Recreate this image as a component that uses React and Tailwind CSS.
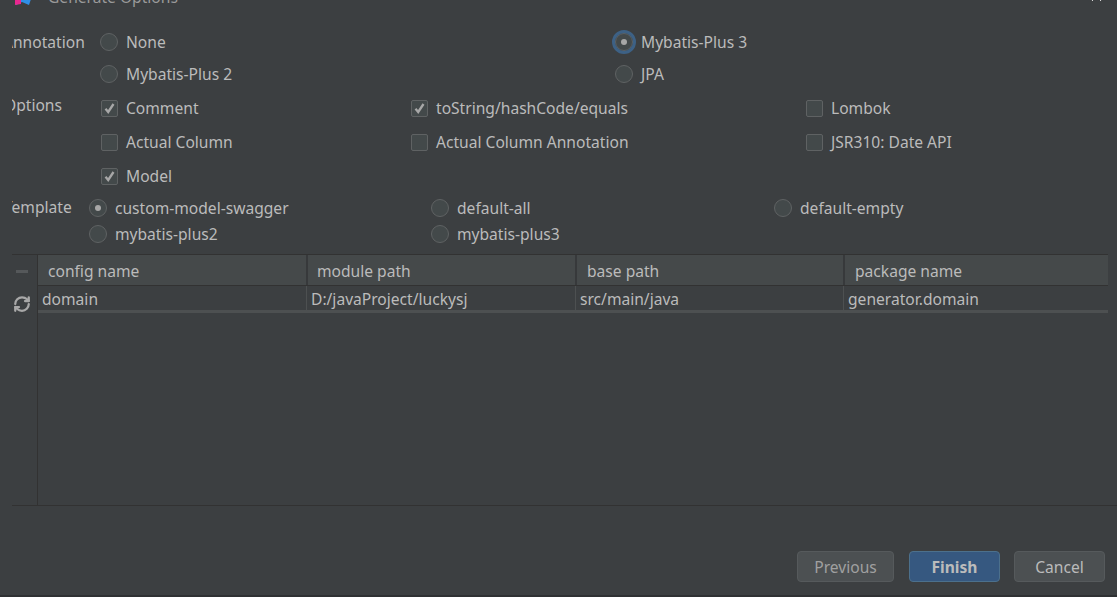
import React from 'react';
import { RefreshCw } from 'lucide-react';

const Radio = ({ checked, focused }) => (
  <span
    className={`flex h-[18px] w-[18px] shrink-0 items-center justify-center rounded-full border border-[#5f6263] bg-[#43494a] ${
      focused ? 'outline-[3px] outline-[#3d6185]' : ''
    }`}
  >
    {checked && <span className="h-[6px] w-[6px] rounded-full bg-[#a7a7a7]" />}
  </span>
);

const Check = ({ checked }) => (
  <span className="flex h-[17px] w-[17px] shrink-0 items-center justify-center rounded-[2px] border border-[#5f6263] bg-[#43494a]">
    {checked && (
      <svg width="13" height="13" viewBox="0 0 13 13" fill="none">
        <path d="M2.5 6.8 5.2 10 10.5 2" stroke="#a7a7a7" strokeWidth="2.3" />
      </svg>
    )}
  </span>
);

const Option = ({ label, box, checked, focused }) => (
  <div className="flex items-center gap-[8px]">
    {box ? <Check checked={checked} /> : <Radio checked={checked} focused={focused} />}
    <span className="whitespace-nowrap">{label}</span>
  </div>
);

const columns = [
  { name: 'config name', value: 'domain', head: 'w-[270px] pl-[10px]', body: 'w-[269px]' },
  { name: 'module path', value: 'D:/javaProject/luckysj', head: 'w-[269px] pl-[9px]', body: 'w-[269px]' },
  { name: 'base path', value: 'src/main/java', head: 'w-[268px] pl-[10px]', body: 'w-[268px]' },
  { name: 'package name', value: 'generator.domain', head: 'w-[263px] pl-[10px]', body: 'w-[264px]' },
];

export default function App() {
  return (
    <div className="flex h-[597px] w-[1117px] flex-col overflow-hidden border-b-2 border-[#2f3133] bg-[#3c3f41] text-[15.6px] leading-[20px] text-[#bbbbbb] [font-family:'Noto_Sans',sans-serif]">
      <div className="flex h-[20px] shrink-0 overflow-hidden pl-[14px] pr-[15px]">
        <svg className="mt-[-12px] shrink-0" width="19" height="18" viewBox="0 0 19 18">
          <path d="M1 2h12l5 6-3 9-7-3-6 3z" fill="#2f8fe8" />
          <path d="M1 8h6v8l-6 1z" fill="#e8288f" />
        </svg>
        <span className="ml-[15px] mt-[-13px] text-[#9a9a9a]">Generate Options</span>
        <svg className="ml-auto mt-[-9px] shrink-0" width="11" height="11" viewBox="0 0 11 11">
          <path d="M1 0l9 10M10 0 1 10" stroke="#e0e0e0" strokeWidth="1" />
        </svg>
      </div>

      <div className="flex h-[78px] shrink-0 pl-[12px] pt-[12px]">
        <div className="w-[88px] shrink-0 overflow-hidden whitespace-nowrap">
          <span className="ml-[-9px] block">Annotation</span>
        </div>
        <div className="grid h-[52px] grid-cols-[515px_auto] grid-rows-[20px_20px] gap-y-[12px]">
          <Option label="None" />
          <Option label="Mybatis-Plus 3" checked focused />
          <Option label="Mybatis-Plus 2" />
          <Option label="JPA" />
        </div>
      </div>

      <div className="flex h-[88px] shrink-0 pl-[12px]">
        <div className="mt-[-3px] w-[88px] shrink-0 overflow-hidden whitespace-nowrap">
          <span className="ml-[-8px] block">Options</span>
        </div>
        <div className="grid grid-cols-[310px_395px_auto] grid-rows-[20px_20px_20px] gap-y-[14px] pl-[1px]">
          <Option box checked label="Comment" />
          <Option box checked label="toString/hashCode/equals" />
          <Option box label="Lombok" />
          <Option box label="Actual Column" />
          <Option box label="Actual Column Annotation" />
          <Option box label="JSR310: Date API" />
          <Option box checked label="Model" />
        </div>
      </div>

      <div className="mt-[12px] flex h-[46px] shrink-0 pl-[12px]">
        <div className="mt-[-1px] w-[77px] shrink-0 overflow-hidden whitespace-nowrap">
          <span className="ml-[-8px] block">Template</span>
        </div>
        <div className="grid grid-cols-[342px_343px_auto] grid-rows-[20px_20px] gap-y-[6px]">
          <Option checked label="custom-model-swagger" />
          <Option label="default-all" />
          <Option label="default-empty" />
          <Option label="mybatis-plus2" />
          <Option label="mybatis-plus3" />
        </div>
      </div>

      <div className="ml-[12px] mt-[10px] flex h-[252px] shrink-0 border-b border-[#323232]">
        <div className="w-[26px] shrink-0 border-r border-t border-[#323232]">
          <div className="flex h-[32px] items-center pl-[4px]">
            <span className="h-[3px] w-[12px] bg-[#55585a]" />
          </div>
          <div className="flex h-[34px] items-center pl-[1px]">
            <RefreshCw size={18} strokeWidth={3} color="#a8a8a8" />
          </div>
        </div>
        <div className="flex w-[1070px] flex-col">
          <div className="flex h-[32px] border-y border-[#323232] bg-[#45494a]">
            {columns.map((c) => (
              <div key={c.name} className={`${c.head} flex items-center border-r-2 border-[#37393b] pt-[2px] last:border-r-0`}>
                {c.name}
              </div>
            ))}
          </div>
          <div className="flex h-[27px] border-b-[3px] border-[#4d5051]">
            {columns.map((c) => (
              <div key={c.value} className={`${c.body} flex items-center border-r border-[#4d5051] pl-[4px] pt-[2px] last:border-r-0`}>
                {c.value}
              </div>
            ))}
          </div>
        </div>
      </div>

      <div className="mt-[45px] flex justify-end gap-[14px] pr-[12px]">
        <button className="mr-px h-[31px] w-[97px] rounded-[4px] border border-[#565a5c] bg-[#4c5052] text-[#a0a0a0]">Previous</button>
        <button className="h-[31px] w-[91px] rounded-[4px] border border-[#4c708c] bg-[#365880] font-bold text-[#bbbbbb]">Finish</button>
        <button className="h-[31px] w-[91px] rounded-[4px] border border-[#565a5c] bg-[#4c5052]">Cancel</button>
      </div>
    </div>
  );
}
